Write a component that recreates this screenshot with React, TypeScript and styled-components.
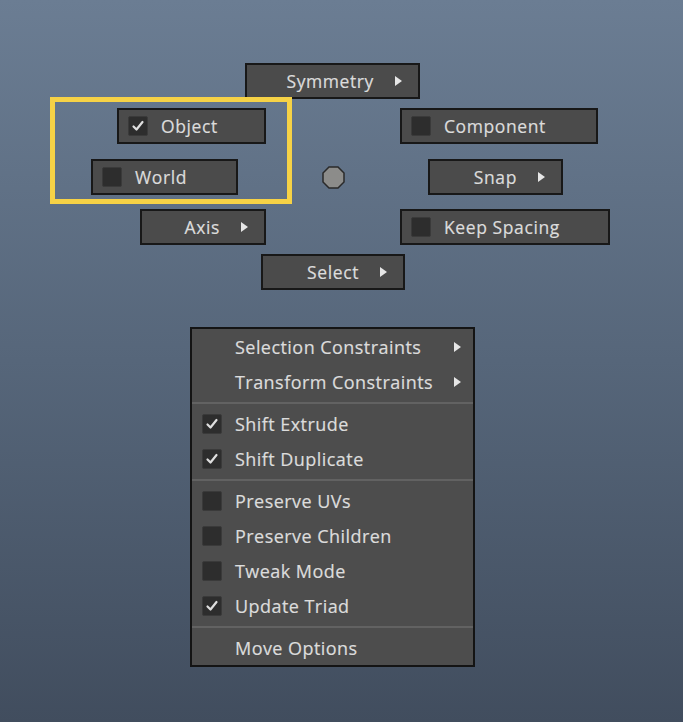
import React from 'react';
import styled, { createGlobalStyle } from 'styled-components';

const GlobalStyle = createGlobalStyle`
    html, body {
        margin: 0;
        padding: 0;
    }
    body {
        font-family: 'Open Sans', 'Liberation Sans', sans-serif;
        color: #dadada;
    }
`;

const Viewport = styled.div`
    width: 683px;
    height: 722px;
    background: linear-gradient(180deg, #6b7d93 0%, #56667a 50%, #414d5e 100%);
    display: flex;
    flex-direction: column;
    overflow: hidden;
`;

// radial marking menu: item placement is the content itself
const MarkingCanvas = styled.div`
    position: relative;
    height: 327px;
    flex-shrink: 0;
`;

const MarkItem = styled.div<{ $kind: 'check' | 'sub' }>`
    position: absolute;
    box-sizing: border-box;
    height: 36px;
    display: flex;
    align-items: center;
    justify-content: ${(p) => (p.$kind === 'sub' ? 'flex-end' : 'flex-start')};
    gap: ${(p) => (p.$kind === 'sub' ? '21px' : '13px')};
    padding: ${(p) => (p.$kind === 'sub' ? '0 16px 0 0' : '0 0 0 9px')};
    background: #4b4b4b;
    border: 2px solid #181818;
    font-size: 17.5px;
    letter-spacing: 0.6px;
    color: #dcdcdc;
    -webkit-text-stroke: 0.2px #dcdcdc;
`;

const Highlight = styled.div`
    position: absolute;
    left: 50px;
    top: 97px;
    width: 242px;
    height: 107px;
    box-sizing: border-box;
    border: 5px solid #f6d246;
`;

const CenterDot = styled.svg`
    position: absolute;
    left: 322px;
    top: 166px;
`;

const Box = styled.span`
    width: 20px;
    height: 20px;
    box-sizing: border-box;
    flex-shrink: 0;
    background: #2d2d2d;
    border: 1px solid #3a3a3a;
    border-radius: 2px;
    display: flex;
    align-items: center;
    justify-content: center;
`;

const Arrow = styled.span`
    width: 0;
    height: 0;
    border-top: 5.5px solid transparent;
    border-bottom: 5.5px solid transparent;
    border-left: 7px solid #e6e6e6;
`;

const OptionMenu = styled.div`
    margin-left: 190px;
    width: 285px;
    box-sizing: border-box;
    background: #4d4d4d;
    border: 2px solid #141414;
    display: flex;
    flex-direction: column;
`;

const MenuRow = styled.div`
    height: 35px;
    display: grid;
    grid-template-columns: 43px 1fr 19px;
    align-items: center;
    font-size: 18px;
    letter-spacing: 0.45px;
    color: #dcdcdc;
    -webkit-text-stroke: 0.2px #dcdcdc;
`;

const BoxCell = styled.div`
    padding-left: 10px;
    display: flex;
`;

const Separator = styled.div`
    height: 7px;
    display: flex;
    align-items: center;

    &::after {
        content: '';
        flex: 1;
        height: 2px;
        background: #626262;
    }
`;

function Check() {
    return (
        <svg width="14" height="14" viewBox="0 0 14 14">
            <polyline
                points="2.5,7.5 5.5,10.5 11.5,3"
                fill="none"
                stroke="#dedede"
                strokeWidth="2.2"
                strokeLinecap="round"
                strokeLinejoin="round"
            />
        </svg>
    );
}

function CheckBox({ checked }: { checked?: boolean }) {
    return <Box>{checked && <Check />}</Box>;
}

type Mark = {
    label: string;
    x: number;
    y: number;
    w: number;
    kind: 'check' | 'sub';
    checked?: boolean;
};

const marks: Mark[] = [
    { label: 'Symmetry', x: 245, y: 63, w: 175, kind: 'sub' },
    { label: 'Object', x: 117, y: 108, w: 149, kind: 'check', checked: true },
    { label: 'Component', x: 400, y: 108, w: 198, kind: 'check' },
    { label: 'World', x: 91, y: 159, w: 147, kind: 'check' },
    { label: 'Snap', x: 428, y: 159, w: 135, kind: 'sub' },
    { label: 'Axis', x: 140, y: 209, w: 126, kind: 'sub' },
    { label: 'Keep Spacing', x: 400, y: 209, w: 210, kind: 'check' },
    { label: 'Select', x: 261, y: 254, w: 144, kind: 'sub' },
];

type Row =
    | { sep: true }
    | { sep?: false; label: string; box?: boolean; checked?: boolean; sub?: boolean };

const rows: Row[] = [
    { label: 'Selection Constraints', sub: true },
    { label: 'Transform Constraints', sub: true },
    { sep: true },
    { label: 'Shift Extrude', box: true, checked: true },
    { label: 'Shift Duplicate', box: true, checked: true },
    { sep: true },
    { label: 'Preserve UVs', box: true },
    { label: 'Preserve Children', box: true },
    { label: 'Tweak Mode', box: true },
    { label: 'Update Triad', box: true, checked: true },
    { sep: true },
    { label: 'Move Options' },
];

export default function App() {
    return (
        <>
            <GlobalStyle />
            <Viewport>
                <MarkingCanvas>
                    {marks.map((m) => (
                        <MarkItem
                            key={m.label}
                            $kind={m.kind}
                            style={{ left: m.x, top: m.y, width: m.w }}
                        >
                            {m.kind === 'check' && <CheckBox checked={m.checked} />}
                            <span>{m.label}</span>
                            {m.kind === 'sub' && <Arrow />}
                        </MarkItem>
                    ))}
                    <Highlight />
                    <CenterDot width="23" height="23" viewBox="0 0 23 23">
                        <polygon
                            points="7,1 16,1 22,7 22,16 16,22 7,22 1,16 1,7"
                            fill="#8c8c8a"
                            stroke="#2a2a2a"
                            strokeWidth="1.5"
                        />
                    </CenterDot>
                </MarkingCanvas>

                <OptionMenu>
                    {rows.map((r, i) =>
                        r.sep ? (
                            <Separator key={i} />
                        ) : (
                            <MenuRow key={i}>
                                <BoxCell>{r.box && <CheckBox checked={r.checked} />}</BoxCell>
                                <span>{r.label}</span>
                                {r.sub ? <Arrow /> : <span />}
                            </MenuRow>
                        )
                    )}
                </OptionMenu>
            </Viewport>
        </>
    );
}
